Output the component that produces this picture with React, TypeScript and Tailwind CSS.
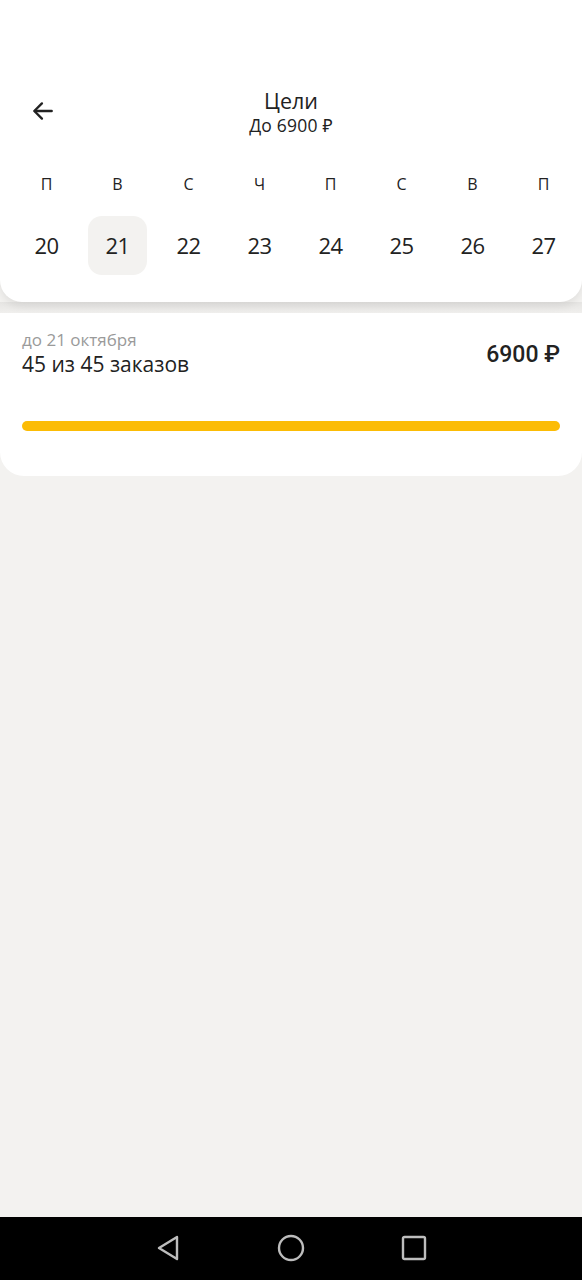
import React from "react";

const days = [
  { l: "П", n: "20" },
  { l: "В", n: "21", sel: true },
  { l: "С", n: "22" },
  { l: "Ч", n: "23" },
  { l: "П", n: "24" },
  { l: "С", n: "25" },
  { l: "В", n: "26" },
  { l: "П", n: "27" },
];

export default function App() {
  return (
    <div
      className="w-[582px] h-[1280px] bg-[#f3f2f0] flex flex-col overflow-hidden"
      style={{ fontFamily: "'Open Sans', 'Noto Sans', sans-serif" }}
    >
      <div className="bg-white rounded-b-[22px] h-[302px] flex flex-col shadow-[0_4px_8px_rgba(0,0,0,0.08)] relative z-10">
        <div className="h-[88px]" />
        <div className="relative flex flex-col items-center h-[50px]">
          <button className="absolute left-[30px] top-[10px] text-[#222]">
            <svg width="26" height="26" viewBox="0 0 24 24" fill="none" stroke="#222" strokeWidth="2.2" strokeLinecap="round" strokeLinejoin="round">
              <path d="M20 12H4.5" />
              <path d="M11 5l-7 7 7 7" />
            </svg>
          </button>
          <div className="text-[21.5px] leading-[26px] text-[#222]">Цели</div>
          <div className="text-[17.5px] leading-[22px] text-[#222] tracking-[0.2px]">До 6900 ₽</div>
        </div>
        <div className="grid grid-cols-[repeat(8,71px)] pl-[11px] mt-[36px]">
          {days.map((d, i) => (
            <div key={i} className="flex flex-col items-center">
              <div className="text-[16px] leading-[20px] text-[#222] h-[20px]">{d.l}</div>
              <div
                className={
                  "mt-[22px] w-[59px] h-[59px] rounded-[14px] flex items-center justify-center text-[22px] text-[#222] tracking-[-0.5px] " +
                  (d.sel ? "bg-[#f3f2f0]" : "")
                }
              >
                {d.n}
              </div>
            </div>
          ))}
        </div>
      </div>
      <div className="h-[11px] bg-gradient-to-b from-[#e6e5e3] to-[#f0efed]" />
      <div className="bg-white rounded-b-[24px] h-[163px] px-[22px] pt-[16px] flex flex-col">
        <div className="flex justify-between">
          <div className="flex flex-col">
            <div className="text-[17px] leading-[22px] text-[#9a9a9a]">до 21 октября</div>
            <div className="text-[21px] leading-[26px] text-[#222]">45 из 45 заказов</div>
          </div>
          <div
            className="text-[23px] font-medium text-[#222] mt-[12px] leading-[28px]"
            style={{ fontFamily: "Roboto, 'Open Sans', sans-serif" }}
          >
            6900 ₽
          </div>
        </div>
        <div className="mt-[44px] h-[10px] rounded-full bg-[#fcbc05]" />
      </div>
      <div className="flex-1" />
      <div className="h-[63px] bg-black flex items-center justify-center">
        <div className="flex items-center gap-[96px] mt-[-1px]">
          <svg width="26" height="28" viewBox="0 0 26 28" fill="none" stroke="#bdbdbd" strokeWidth="2.4" strokeLinejoin="round">
            <path d="M22 3L4 14l18 11z" />
          </svg>
          <svg width="28" height="28" viewBox="0 0 28 28" fill="none" stroke="#bdbdbd" strokeWidth="2.4">
            <circle cx="14" cy="14" r="12" />
          </svg>
          <svg width="26" height="26" viewBox="0 0 26 26" fill="none" stroke="#bdbdbd" strokeWidth="2.4" strokeLinejoin="round">
            <rect x="2" y="2" width="22" height="22" rx="1.5" />
          </svg>
        </div>
      </div>
    </div>
  );
}
